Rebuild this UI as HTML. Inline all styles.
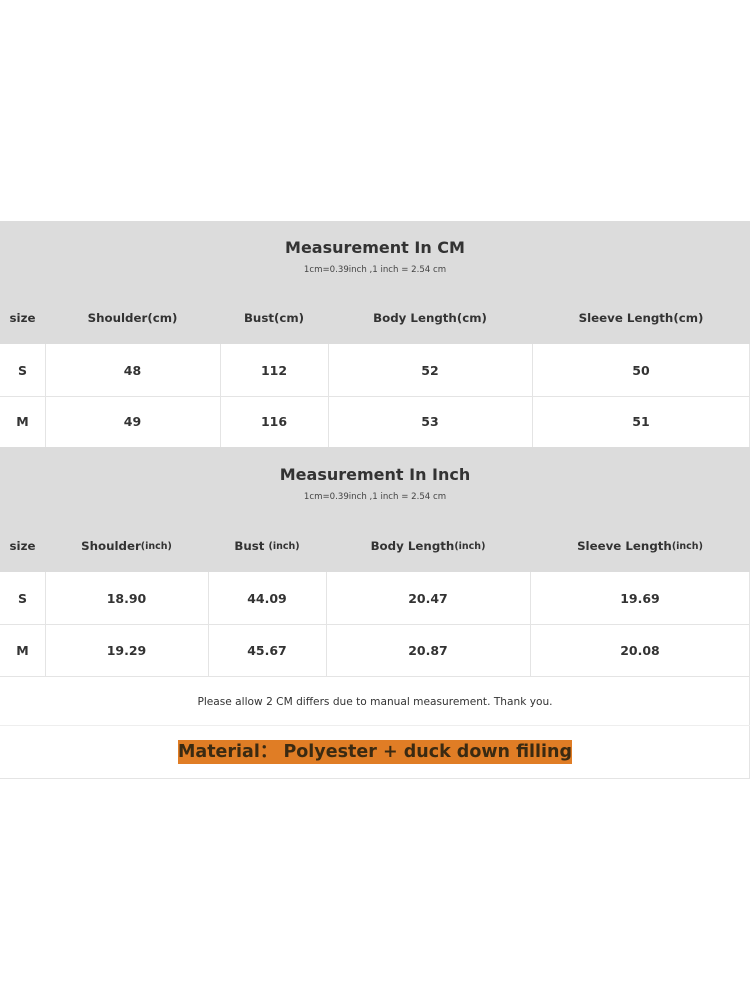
<!DOCTYPE html>
<html><head><meta charset="utf-8"><style>
*{margin:0;padding:0;box-sizing:border-box}
body{width:750px;height:1000px;background:#fff;position:relative;font-family:"DejaVu Sans","Liberation Sans",sans-serif;color:#333;overflow:hidden}
.a{position:absolute}
.g{background:#dcdcdc}
.c{position:absolute;display:flex;align-items:center;justify-content:center;font-weight:bold;font-size:12.5px;white-space:nowrap}
.t{font-size:16px;font-weight:bold}
.s{font-size:8.6px;font-weight:normal;color:#444}
.h{font-size:11.8px}
.sm{font-size:9.5px}
.vl{position:absolute;width:1px;background:#e4e4e4}
.hr{position:absolute;height:1px;background:#e4e4e4;left:0;width:750px}
</style></head><body>
<div class="a g" style="left:0;top:221px;width:750px;height:123px"></div>
<div class="c t" style="left:0;top:235px;width:750px;height:24px">Measurement In CM</div>
<div class="c s" style="left:0;top:263px;width:750px;height:14px">1cm=0.39inch ,1 inch = 2.54 cm</div>
<div class="c h" style="left:0;top:308px;width:45px;height:20px">size</div>
<div class="c h" style="left:45px;top:308px;width:175px;height:20px">Shoulder(cm)</div>
<div class="c h" style="left:220px;top:308px;width:108px;height:20px">Bust(cm)</div>
<div class="c h" style="left:328px;top:308px;width:204px;height:20px">Body Length(cm)</div>
<div class="c h" style="left:532px;top:308px;width:218px;height:20px">Sleeve Length(cm)</div>
<div class="hr" style="top:396px"></div>
<div class="vl" style="left:45px;top:344px;height:103px"></div>
<div class="vl" style="left:220px;top:344px;height:103px"></div>
<div class="vl" style="left:328px;top:344px;height:103px"></div>
<div class="vl" style="left:532px;top:344px;height:103px"></div>
<div class="vl" style="left:749px;top:344px;height:103px"></div>
<div class="c" style="left:0;top:344px;width:45px;height:52px">S</div>
<div class="c" style="left:45px;top:344px;width:175px;height:52px">48</div>
<div class="c" style="left:220px;top:344px;width:108px;height:52px">112</div>
<div class="c" style="left:328px;top:344px;width:204px;height:52px">52</div>
<div class="c" style="left:532px;top:344px;width:218px;height:52px">50</div>
<div class="c" style="left:0;top:396px;width:45px;height:51px">M</div>
<div class="c" style="left:45px;top:396px;width:175px;height:51px">49</div>
<div class="c" style="left:220px;top:396px;width:108px;height:51px">116</div>
<div class="c" style="left:328px;top:396px;width:204px;height:51px">53</div>
<div class="c" style="left:532px;top:396px;width:218px;height:51px">51</div>

<div class="a g" style="left:0;top:447px;width:750px;height:125px"></div>
<div class="c t" style="left:0;top:462px;width:750px;height:24px">Measurement In Inch</div>
<div class="c s" style="left:0;top:490px;width:750px;height:14px">1cm=0.39inch ,1 inch = 2.54 cm</div>
<div class="c h" style="left:0;top:536px;width:45px;height:20px">size</div>
<div class="c h" style="left:45px;top:536px;width:163px;height:20px">Shoulder<span class="sm">(inch)</span></div>
<div class="c h" style="left:208px;top:536px;width:118px;height:20px">Bust&nbsp;<span class="sm">(inch)</span></div>
<div class="c h" style="left:326px;top:536px;width:204px;height:20px">Body Length<span class="sm">(inch)</span></div>
<div class="c h" style="left:530px;top:536px;width:220px;height:20px">Sleeve Length<span class="sm">(inch)</span></div>
<div class="hr" style="top:624px"></div>
<div class="hr" style="top:676px"></div>
<div class="vl" style="left:45px;top:572px;height:104px"></div>
<div class="vl" style="left:208px;top:572px;height:104px"></div>
<div class="vl" style="left:326px;top:572px;height:104px"></div>
<div class="vl" style="left:530px;top:572px;height:104px"></div>
<div class="vl" style="left:749px;top:572px;height:206px"></div>
<div class="c" style="left:0;top:572px;width:45px;height:52px">S</div>
<div class="c" style="left:45px;top:572px;width:163px;height:52px">18.90</div>
<div class="c" style="left:208px;top:572px;width:118px;height:52px">44.09</div>
<div class="c" style="left:326px;top:572px;width:204px;height:52px">20.47</div>
<div class="c" style="left:530px;top:572px;width:220px;height:52px">19.69</div>
<div class="c" style="left:0;top:624px;width:45px;height:52px">M</div>
<div class="c" style="left:45px;top:624px;width:163px;height:52px">19.29</div>
<div class="c" style="left:208px;top:624px;width:118px;height:52px">45.67</div>
<div class="c" style="left:326px;top:624px;width:204px;height:52px">20.87</div>
<div class="c" style="left:530px;top:624px;width:220px;height:52px">20.08</div>

<div class="c" style="left:0;top:677px;width:750px;height:49px;font-weight:normal;font-size:10.6px">Please allow 2 CM differs due to manual measurement. Thank you.</div>
<div class="hr" style="top:725px;background:#eee"></div>
<div class="c" style="left:0;top:726px;width:750px;height:52px"><span style="background:#e07d25;color:#3a2a12;font-size:17.5px;padding:1px 0;line-height:22px">Material：&nbsp;Polyester + duck down filling</span></div>
<div class="hr" style="top:778px"></div>
</body></html>
